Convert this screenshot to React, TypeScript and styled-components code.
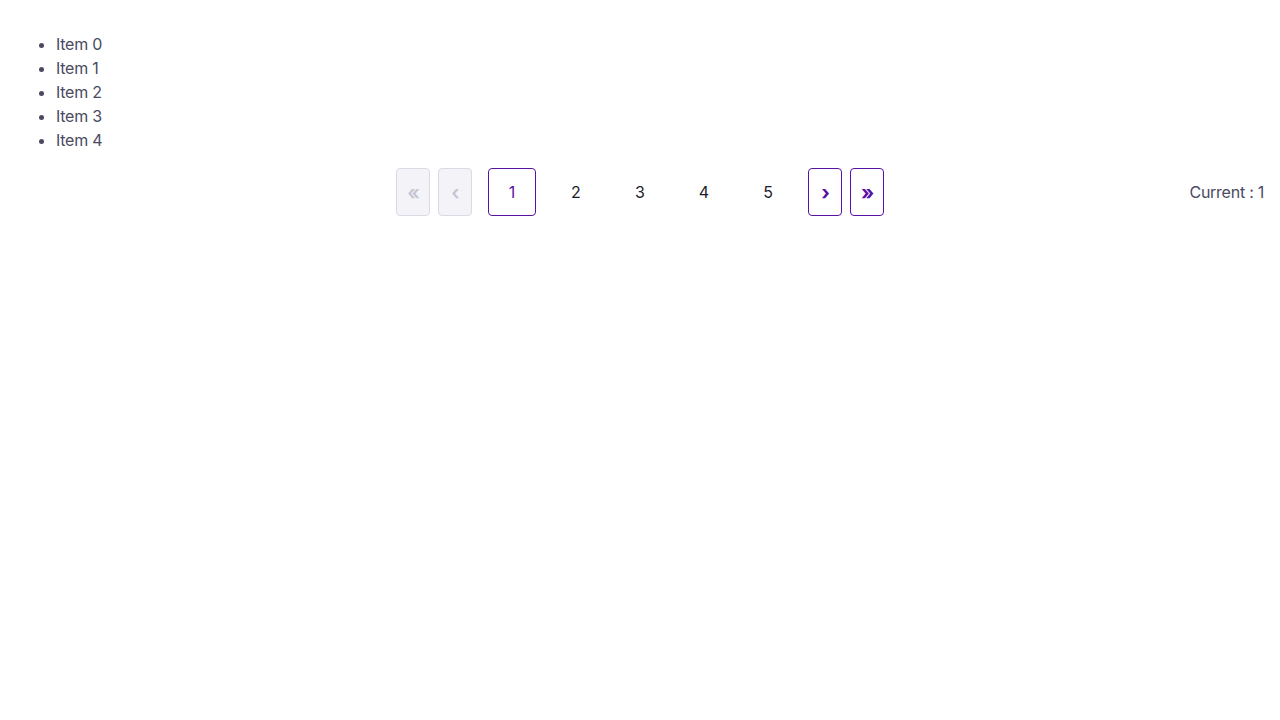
import React from "react";
import styled, { createGlobalStyle, css } from "styled-components";

const Global = createGlobalStyle`
  html, body { margin: 0; padding: 0; background: #fff; }
  body { font-family: Inter, "Noto Sans", sans-serif; font-size: 16px; color: #4a4a62; letter-spacing: -0.25px; }
`;

const Page = styled.div`
  padding: 16px;
`;

const List = styled.ul`
  margin: 16px 0;
  padding-left: 40px;
  line-height: 24px;
  color: #4a4a62;
`;

const Row = styled.div`
  display: grid;
  grid-template-columns: 1fr auto 1fr;
  align-items: center;
`;

const Pager = styled.nav`
  grid-column: 2;
  display: flex;
  align-items: center;
  gap: 16px;
`;

const Group = styled.div<{ $gap: number }>`
  display: flex;
  align-items: center;
  gap: ${(p) => p.$gap}px;
`;

const NavButton = styled.button<{ $disabled?: boolean }>`
  width: 34px;
  height: 48px;
  box-sizing: border-box;
  border-radius: 4px;
  padding: 2px 0 0;
  display: flex;
  align-items: center;
  justify-content: center;
  font-family: Inter, sans-serif;
  font-size: 20px;
  line-height: 1;
  letter-spacing: -1px;
  ${(p) =>
    p.$disabled
      ? css`
          background: #f4f4f8;
          border: 1px solid #d8dae6;
          color: #c3c5d3;
          font-weight: 600;
        `
      : css`
          background: #fff;
          border: 1px solid #5a10a6;
          color: #5a10a6;
          font-weight: 700;
        `}
`;

const PageButton = styled.button<{ $active?: boolean }>`
  width: 48px;
  height: 48px;
  box-sizing: border-box;
  border-radius: 4px;
  padding: 0;
  font-family: Inter, sans-serif;
  font-size: 16px;
  background: #fff;
  border: 1px solid ${(p) => (p.$active ? "#5a10a6" : "transparent")};
  color: ${(p) => (p.$active ? "#5a10a6" : "#1c1c2e")};
`;

const Current = styled.div`
  justify-self: end;
  color: #4a4a62;
  font-size: 16px;
`;

export default function App() {
  return (
    <Page>
      <Global />
      <List>
        {[0, 1, 2, 3, 4].map((i) => (
          <li key={i}>Item {i}</li>
        ))}
      </List>
      <Row>
        <Pager>
          <Group $gap={8}>
            <NavButton $disabled>«</NavButton>
            <NavButton $disabled>‹</NavButton>
          </Group>
          <Group $gap={16}>
            {[1, 2, 3, 4, 5].map((n) => (
              <PageButton key={n} $active={n === 1}>
                {n}
              </PageButton>
            ))}
          </Group>
          <Group $gap={8}>
            <NavButton>›</NavButton>
            <NavButton>»</NavButton>
          </Group>
        </Pager>
        <Current>Current : 1</Current>
      </Row>
    </Page>
  );
}
